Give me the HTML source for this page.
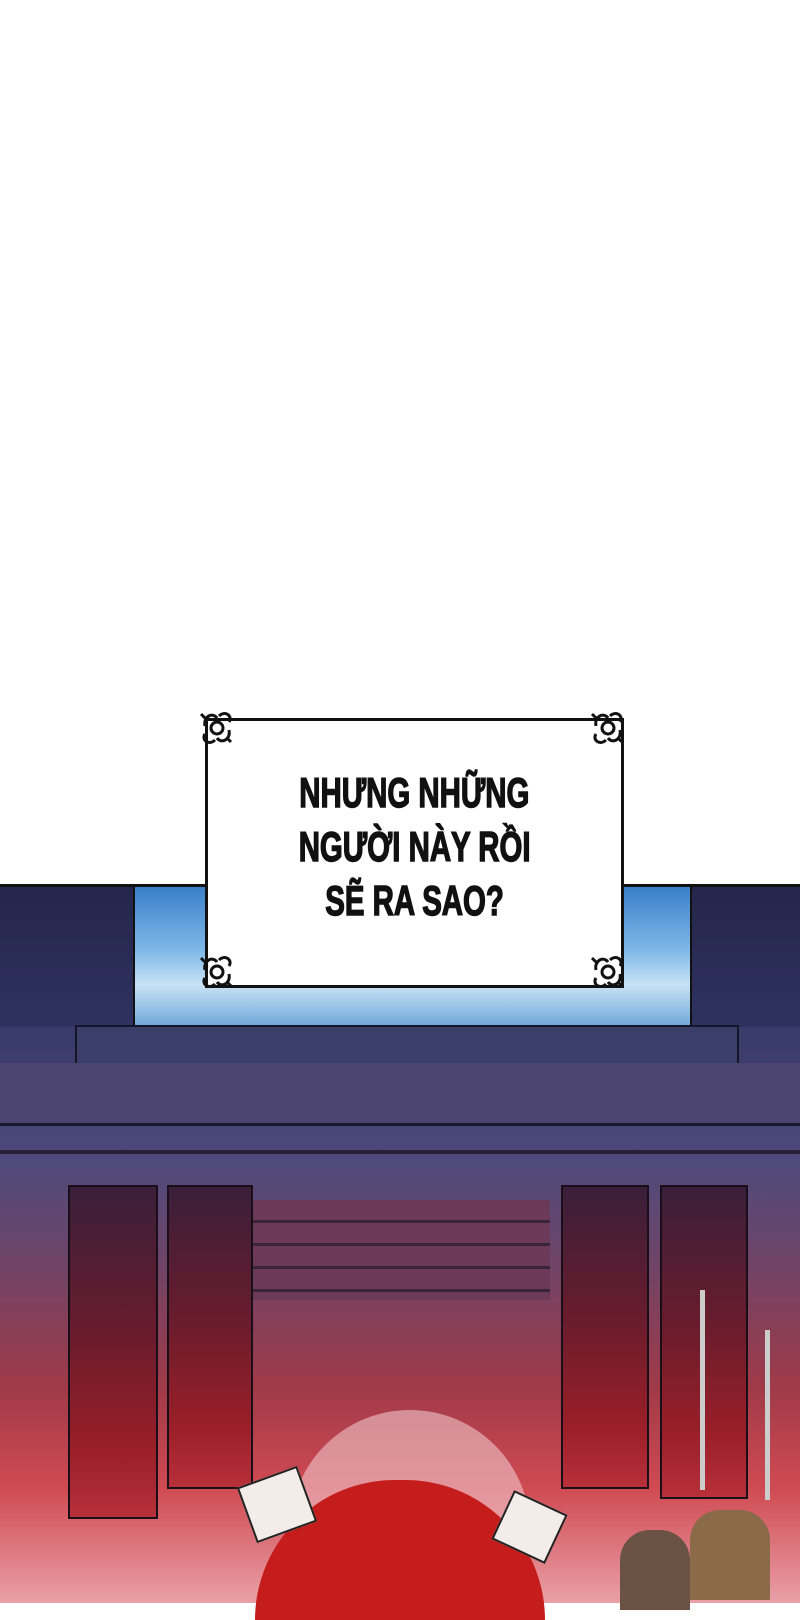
<!DOCTYPE html>
<html><head><meta charset="utf-8"><style>
html,body{margin:0;padding:0}
body{width:800px;height:1600px;position:relative;overflow:hidden;background:#fff;font-family:"Liberation Sans",sans-serif}
.a{position:absolute}
.scene{left:0;top:884px;width:800px;height:716px;background:linear-gradient(180deg,#2c2e52 0%,#3a3c6c 22%,#4e4a7c 38%,#6e4468 52%,#a03a48 70%,#d04a52 84%,#eaa0a8 100%);border-top:3px solid #111}
.sky{left:133px;top:887px;width:557px;height:140px;background:linear-gradient(180deg,#3a7fc8 0%,#7fb8e8 45%,#c8e2f5 70%,#6fa6d8 100%)}
.tower{background:linear-gradient(180deg,#24264a,#2f3260);border-right:2px solid #111}
.ban{background:linear-gradient(180deg,#3a1f3a 0%,#6a1c2c 45%,#9a1f28 80%,#b8303a 100%);border:2px solid #1a0f18}
.box{left:205px;top:718px;width:413px;height:264px;background:#fff;border:3px solid #111}
.txt{left:205px;top:766px;width:419px;text-align:center;font-weight:bold;font-size:42px;line-height:54px;color:#111;-webkit-text-stroke:1.5px #111}
.txt span{display:inline-block;transform:scaleX(.7)}
</style></head><body>
<div class="a scene"></div>
<div class="a sky"></div>
<div class="a tower" style="left:0;top:887px;width:133px;height:140px"></div>
<div class="a tower" style="left:690px;top:887px;width:110px;height:140px;border-left:2px solid #111"></div>
<div class="a" style="left:75px;top:1025px;width:660px;height:38px;background:#3c3e6a;border:2px solid #15152a"></div>
<div class="a" style="left:0;top:1063px;width:800px;height:60px;background:#4b4470;border-bottom:3px solid #1a1a2e"></div>
<div class="a" style="left:0;top:1150px;width:800px;height:4px;background:#2a2038"></div>
<div class="a" style="left:250px;top:1200px;width:300px;height:100px;background:repeating-linear-gradient(180deg,#6a3a58 0 20px,#3a2438 20px 23px)"></div>
<div class="a ban" style="left:68px;top:1185px;width:86px;height:330px"></div>
<div class="a ban" style="left:167px;top:1185px;width:82px;height:300px"></div>
<div class="a ban" style="left:561px;top:1185px;width:84px;height:300px"></div>
<div class="a ban" style="left:660px;top:1185px;width:84px;height:310px"></div>
<div class="a" style="left:290px;top:1410px;width:240px;height:200px;border-radius:120px 120px 0 0;background:#f0c6cc;opacity:.6"></div>
<div class="a" style="left:255px;top:1480px;width:290px;height:140px;border-radius:140px 140px 0 0;background:#c51c1c"></div>
<div class="a" style="left:245px;top:1475px;width:60px;height:55px;background:#f4ece8;transform:rotate(-20deg);border:2px solid #222"></div>
<div class="a" style="left:500px;top:1500px;width:55px;height:50px;background:#f4ece8;transform:rotate(25deg);border:2px solid #222"></div>
<div class="a" style="left:700px;top:1290px;width:5px;height:200px;background:#ccc"></div>
<div class="a" style="left:765px;top:1330px;width:5px;height:170px;background:#ccc"></div>
<div class="a" style="left:620px;top:1530px;width:70px;height:80px;background:#6a5244;border-radius:30px 30px 0 0"></div>
<div class="a" style="left:690px;top:1510px;width:80px;height:90px;background:#8a6a48;border-radius:30px 30px 0 0"></div>
<div class="a box"></div>
<svg class="a" style="left:0;top:0" width="800" height="1000">
<defs><g id="o" fill="none" stroke="#111" stroke-width="3"><circle cx="0" cy="0" r="6"/><path d="M-12 -2 C-14 -12 -4 -16 0 -10 M2 -12 C8 -18 16 -12 12 -6 M-2 12 C-8 18 -16 12 -12 6 M12 2 C14 12 4 16 0 10 M-16 -14 l4 4 M14 14 l-4 -4"/></g></defs>
<use href="#o" x="217" y="728"/><use href="#o" x="608" y="728"/><use href="#o" x="217" y="972"/><use href="#o" x="608" y="972"/>
</svg>
<div class="a txt"><span>NHƯNG NHỮNG</span><br><span>NGƯỜI NÀY RỒI</span><br><span>SẼ RA SAO?</span></div>
</body></html>
